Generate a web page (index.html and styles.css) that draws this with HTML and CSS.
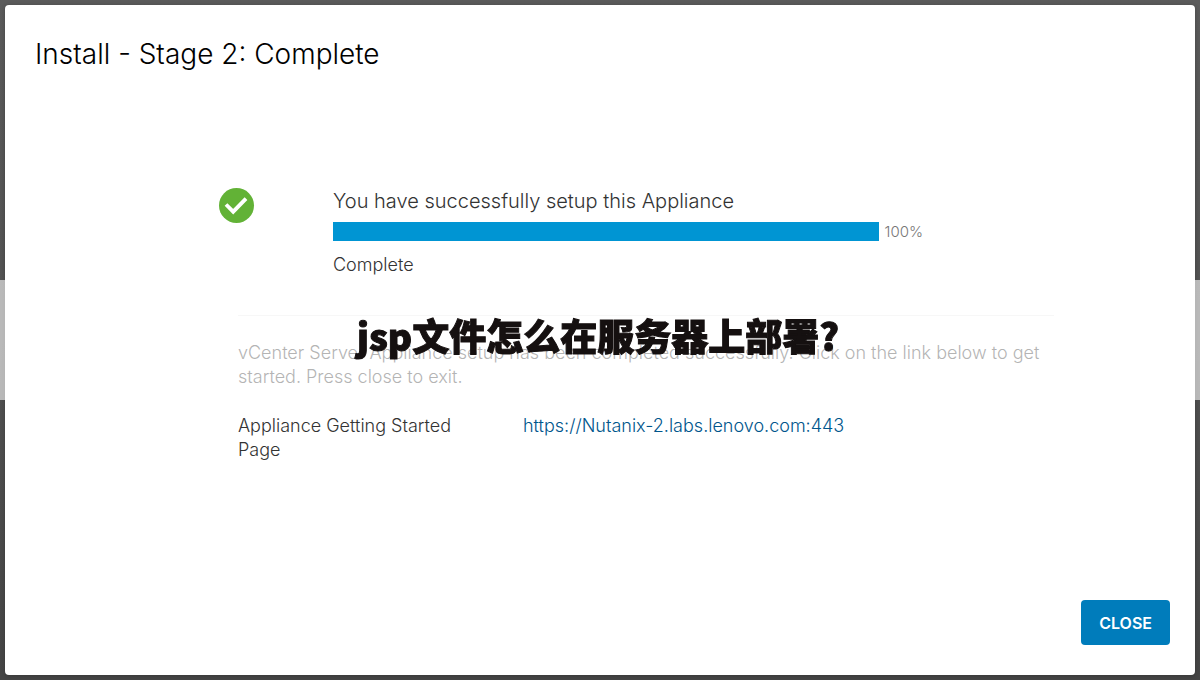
FILE: index.html
```html
<!DOCTYPE html>
<html lang="en">
<head>
<meta charset="utf-8">
<title>Install - Stage 2: Complete</title>
<link rel="stylesheet" href="styles.css">
</head>
<body>
<main class="modal">
  <h1 class="title">Install - Stage 2: Complete</h1>
  <div class="content">
    <section class="status">
      <svg class="status-icon" viewBox="0 0 36 36" aria-hidden="true">
        <circle cx="17.5" cy="17.5" r="17.5" fill="#62b236"/>
        <path d="M7 16.5l7.2 7.2L27 10.6" fill="none" stroke="#fff" stroke-width="3.8"/>
      </svg>
      <div class="status-body">
        <h2 class="status-title" id="status-title">You have successfully setup this Appliance</h2>
        <div class="progress-row">
          <progress class="progress" value="100" max="100" aria-labelledby="status-title"></progress>
          <span class="percent">100%</span>
        </div>
        <p class="status-text">Complete</p>
      </div>
    </section>
    <section class="details">
      <p class="description">vCenter Server Appliance setup has been completed successfully. Click on the link below to get started. Press close to exit.</p>
      <dl class="links">
        <dt>Appliance Getting Started Page</dt>
        <dd><a class="link" href="https://Nutanix-2.labs.lenovo.com:443">https://Nutanix-2.labs.lenovo.com:443</a></dd>
      </dl>
    </section>
  </div>
  <footer class="footer">
    <button class="close" type="button">CLOSE</button>
  </footer>
</main>
<div class="banner" lang="zh-CN"><span class="banner-text">jsp文件怎么在服务器上部署?</span></div>
</body>
</html>
```
FILE: styles.css
```css
* {
  box-sizing: border-box;
}

body {
  margin: 0;
  min-height: 100vh;
  display: flex;
  padding: 5px;
  background: linear-gradient(#5b5b5b, #525252 50%, #454545);
  font-family: Inter, "Open Sans", sans-serif;
  font-weight: 300;
  color: #333;
}

h1,
h2,
p,
dl,
dd {
  margin: 0;
  font-weight: 300;
}

.modal {
  flex: 1;
  display: flex;
  flex-direction: column;
  padding: 30px 25px 30px 30px;
  background: #fff;
  border-radius: 4px;
  box-shadow: 0 1px 4px #2226;
}

.title {
  font-size: 28px;
  line-height: 38px;
  color: #000;
}

.content {
  flex: 1;
  width: 75%;
  margin: 112px auto 0 184px;
}

.status {
  display: flex;
  gap: 78px;
}

.status-icon {
  flex: none;
  width: 36px;
  height: 36px;
  margin-top: 3px;
}

.status-body {
  flex: 1;
}

.status-title {
  font-size: 20px;
  line-height: 32px;
}

.progress-row {
  display: flex;
  align-items: center;
  gap: 6px;
  margin-top: 5px;
}

.progress {
  appearance: none;
  width: 74%;
  height: 19px;
  border: 0;
  background: #0095d3;
}

.progress::-webkit-progress-bar {
  background: #ddd;
}

.progress::-webkit-progress-value {
  background: #0095d3;
}

.percent {
  font-size: 15px;
  line-height: 19px;
  color: #777;
}

.status-text {
  margin-top: 12px;
  font-size: 18px;
  line-height: 24px;
}

.details {
  margin: 38px 16px 0 19px;
  padding-top: 25px;
  border-top: 1px solid #eaeaea;
  font-size: 18px;
  line-height: 24px;
}

.description {
  color: #444;
}

.links {
  display: grid;
  grid-template-columns: 225px 1fr;
  column-gap: 60px;
  margin-top: 25px;
}

.link {
  color: #00568c;
  text-decoration: none;
}

.footer {
  display: flex;
  justify-content: flex-end;
}

.close {
  height: 45px;
  padding: 0 18px;
  border: 0;
  border-radius: 4px;
  background: #007cbb;
  color: #fff;
  font: 600 16px/24px Inter, sans-serif;
}

.banner {
  position: fixed;
  inset: 280px 0 auto;
  height: 120px;
  padding-right: 4px;
  display: flex;
  justify-content: center;
  background: #fff9;
  pointer-events: none;
}

.banner-text {
  font: 900 37px/110px "Noto Sans CJK SC", sans-serif;
  color: #151010;
  -webkit-text-stroke: 1px #151010;
}
```
